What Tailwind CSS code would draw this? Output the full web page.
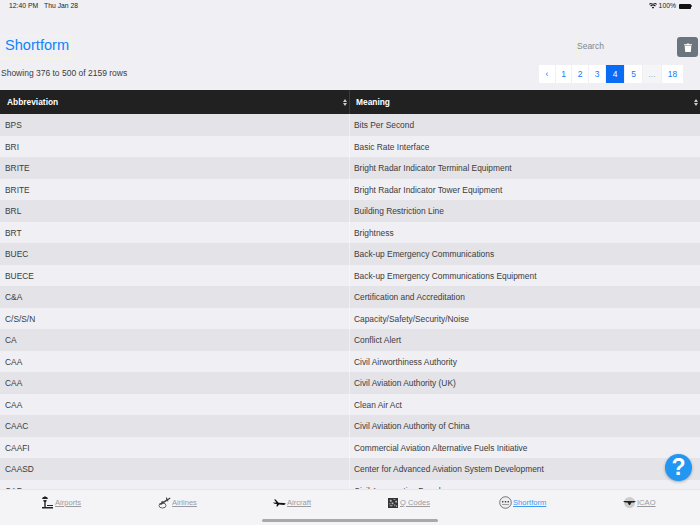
<!DOCTYPE html>
<html lang="en">
<head>
    <meta charset="UTF-8">
    <meta name="viewport" content="width=device-width, initial-scale=1.0">
    <title>Shortform</title>
    <script src="https://cdn.jsdelivr.net/npm/@tailwindcss/browser@4"></script>
</head>
<body class="bg-[#efeff4] font-['Liberation_Sans',sans-serif] text-[#3c3c40]">
<div class="relative w-[700px] h-[525px] overflow-hidden">
    <!-- status bar -->
    <div class="h-[12px] flex items-center justify-between pl-[9px] pr-[8px] text-[6.8px] text-[#222]">
        <div class="flex gap-[6px]"><span>12:40 PM</span><span>Thu Jan 28</span></div>
        <div class="flex items-center gap-[2px]">
            <svg width="8" height="6" viewBox="0 0 16 12"><path d="M8 11.5 5.6 8.6a3.6 3.6 0 0 1 4.8 0zM3.9 6.8 2.5 5.1a8.4 8.4 0 0 1 11 0l-1.4 1.7a6.2 6.2 0 0 0-8.2 0zM1.2 3.7 0 2.1a12 12 0 0 1 16 0l-1.2 1.6a10 10 0 0 0-13.6 0z" fill="#111"/></svg>
            <span>100%</span>
            <div class="w-[12px] h-[5px] bg-[#111] rounded-[1px] ml-[1px]"></div>
            <div class="w-[1px] h-[2px] bg-[#555] -ml-[2px]"></div>
        </div>
    </div>

    <!-- title and search -->
    <div class="h-[24px] mt-[23px] flex items-center justify-between">
        <h1 class="ml-[1px] pl-[3px] pr-[1px] pb-[2px] h-[24px] flex items-center border border-[#f4f4e0] text-[14.6px] text-[#0f84fa]">Shortform</h1>
        <div class="flex items-center">
            <div class="w-[102px] h-[21px] pb-[1px] border border-[#f1f2dc] flex items-center text-[8.5px] text-[#7d8791]">Search</div>
            <div class="w-[21px] h-[20px] -ml-px mr-[2px] rounded-[3px] bg-[#6c757d] flex items-center justify-center">
                <svg width="8" height="9" viewBox="0 0 8 9"><path d="M0 1.2h2.500L3 .4h2l.5.8H8v1H0zM.7 2.800h6.600L6.800 9H1.200z" fill="#fff"/></svg>
            </div>
        </div>
    </div>

    <!-- row count and pagination -->
    <div class="h-[25px] mt-[6px] flex items-start justify-between">
        <div class="pl-px pt-px text-[8.5px] leading-[14px]">Showing 376 to 500 of 2159 rows</div>
        <div class="flex gap-px mr-[17px] text-[8.5px] text-[#0f7bfa] leading-[18px] text-center">
            <div class="w-[16px] h-[18px] bg-white">‹</div>
            <div class="w-[15px] h-[18px] bg-white">1</div>
            <div class="w-[16px] h-[18px] bg-white">2</div>
            <div class="w-[16px] h-[18px] bg-white">3</div>
            <div class="w-[18px] h-[18px] bg-[#0a6cf5] text-white">4</div>
            <div class="w-[17px] h-[18px] bg-white">5</div>
            <div class="w-[18px] h-[18px] bg-[#f5f5f8] text-[#a8adb3]">...</div>
            <div class="w-[21px] h-[18px] bg-white">18</div>
        </div>
    </div>

    <!-- table -->
    <div class="h-[399px] overflow-hidden grid grid-cols-[350px_350px] auto-rows-min text-[8.4px]">
        <div class="h-[24px] bg-[#212121] text-white font-bold flex items-center justify-between pl-[7px] pr-[2px] border-r border-[#3a3a3a]">
            <span>Abbreviation</span>
            <svg width="4" height="7" viewBox="0 0 4 7"><path d="M2 0l2 3H0zM2 7 0 4h4z" fill="#ccc"/></svg>
        </div>
        <div class="h-[24px] bg-[#212121] text-white font-bold flex items-center justify-between pl-[6px] pr-[2px]">
            <span>Meaning</span>
            <svg width="4" height="7" viewBox="0 0 4 7"><path d="M2 0l2 3H0zM2 7 0 4h4z" fill="#ccc"/></svg>
        </div>

        <div class="h-[21.5px] pt-[2px] bg-[#e3e3e8] flex items-center pl-[5px] border-r border-[#efeff4]">BPS</div><div class="h-[21.5px] pt-[2px] bg-[#e3e3e8] flex items-center pl-[4px]">Bits Per Second</div>
        <div class="h-[21.5px] pt-[2px] flex items-center pl-[5px] border-r border-[#f6f6f9]">BRI</div><div class="h-[21.5px] pt-[2px] flex items-center pl-[4px]">Basic Rate Interface</div>
        <div class="h-[21.5px] pt-[2px] bg-[#e3e3e8] flex items-center pl-[5px] border-r border-[#efeff4]">BRITE</div><div class="h-[21.5px] pt-[2px] bg-[#e3e3e8] flex items-center pl-[4px]">Bright Radar Indicator Terminal Equipment</div>
        <div class="h-[21.5px] pt-[2px] flex items-center pl-[5px] border-r border-[#f6f6f9]">BRITE</div><div class="h-[21.5px] pt-[2px] flex items-center pl-[4px]">Bright Radar Indicator Tower Equipment</div>
        <div class="h-[21.5px] pt-[2px] bg-[#e3e3e8] flex items-center pl-[5px] border-r border-[#efeff4]">BRL</div><div class="h-[21.5px] pt-[2px] bg-[#e3e3e8] flex items-center pl-[4px]">Building Restriction Line</div>
        <div class="h-[21.5px] pt-[2px] flex items-center pl-[5px] border-r border-[#f6f6f9]">BRT</div><div class="h-[21.5px] pt-[2px] flex items-center pl-[4px]">Brightness</div>
        <div class="h-[21.5px] pt-[2px] bg-[#e3e3e8] flex items-center pl-[5px] border-r border-[#efeff4]">BUEC</div><div class="h-[21.5px] pt-[2px] bg-[#e3e3e8] flex items-center pl-[4px]">Back-up Emergency Communications</div>
        <div class="h-[21.5px] pt-[2px] flex items-center pl-[5px] border-r border-[#f6f6f9]">BUECE</div><div class="h-[21.5px] pt-[2px] flex items-center pl-[4px]">Back-up Emergency Communications Equipment</div>
        <div class="h-[21.5px] pt-[2px] bg-[#e3e3e8] flex items-center pl-[5px] border-r border-[#efeff4]">C&amp;A</div><div class="h-[21.5px] pt-[2px] bg-[#e3e3e8] flex items-center pl-[4px]">Certification and Accreditation</div>
        <div class="h-[21.5px] pt-[2px] flex items-center pl-[5px] border-r border-[#f6f6f9]">C/S/S/N</div><div class="h-[21.5px] pt-[2px] flex items-center pl-[4px]">Capacity/Safety/Security/Noise</div>
        <div class="h-[21.5px] pt-[2px] bg-[#e3e3e8] flex items-center pl-[5px] border-r border-[#efeff4]">CA</div><div class="h-[21.5px] pt-[2px] bg-[#e3e3e8] flex items-center pl-[4px]">Conflict Alert</div>
        <div class="h-[21.5px] pt-[2px] flex items-center pl-[5px] border-r border-[#f6f6f9]">CAA</div><div class="h-[21.5px] pt-[2px] flex items-center pl-[4px]">Civil Airworthiness Authority</div>
        <div class="h-[21.5px] pt-[2px] bg-[#e3e3e8] flex items-center pl-[5px] border-r border-[#efeff4]">CAA</div><div class="h-[21.5px] pt-[2px] bg-[#e3e3e8] flex items-center pl-[4px]">Civil Aviation Authority (UK)</div>
        <div class="h-[21.5px] pt-[2px] flex items-center pl-[5px] border-r border-[#f6f6f9]">CAA</div><div class="h-[21.5px] pt-[2px] flex items-center pl-[4px]">Clean Air Act</div>
        <div class="h-[21.5px] pt-[2px] bg-[#e3e3e8] flex items-center pl-[5px] border-r border-[#efeff4]">CAAC</div><div class="h-[21.5px] pt-[2px] bg-[#e3e3e8] flex items-center pl-[4px]">Civil Aviation Authority of China</div>
        <div class="h-[21.5px] pt-[2px] flex items-center pl-[5px] border-r border-[#f6f6f9]">CAAFI</div><div class="h-[21.5px] pt-[2px] flex items-center pl-[4px]">Commercial Aviation Alternative Fuels Initiative</div>
        <div class="h-[21.5px] pt-[2px] bg-[#e3e3e8] flex items-center pl-[5px] border-r border-[#efeff4]">CAASD</div><div class="h-[21.5px] pt-[2px] bg-[#e3e3e8] flex items-center pl-[4px]">Center for Advanced Aviation System Development</div>
        <div class="h-[21.5px] pt-[2px] flex items-center pl-[5px] border-r border-[#f6f6f9]">CAB</div><div class="h-[21.5px] pt-[2px] flex items-center pl-[4px]">Civil Aeronautics Board</div>
    </div>

    <!-- help button -->
    <div class="absolute left-[665px] top-[454px] w-[27px] h-[27px] rounded-full bg-[#2196f3] shadow-[0_1px_3px_rgba(0,0,0,0.3)] flex items-center justify-center text-white text-[23px] font-bold">?</div>

    <!-- tab bar -->
    <div class="absolute left-0 right-0 bottom-0 h-[36px] bg-[#f4f4f6] border-t border-[#e6e6ea] text-[7.6px] text-[#9a9a9e]">
        <div class="absolute left-[41px] top-[6px] flex items-center gap-[1px]">
            <svg width="13" height="13" viewBox="0 0 13 13"><path d="M2 1h4l1 2H1zM3.300 4h1.400v7H3.300zM2 4.200h4L5 6H3zM1 11h11v1.400H1zM6 9h6v1H6z" fill="#222"/><path d="M3.500 0h1v1h-1z" fill="#222"/></svg>
            <span class="underline">Airports</span>
        </div>
        <div class="absolute left-[158px] top-[6px] flex items-center gap-[1px]">
            <svg width="13" height="13" viewBox="0 0 13 13"><g fill="none" stroke="#444"><ellipse cx="4.500" cy="9.500" rx="3.500" ry="2.500" stroke-width=".8"/></g><path d="M1 8 12 1.500 12.500 2.500 3 9zM8 1l1 1 1.500 3-1 .5L8 3zM4 5l2 1-1 1-2-1z" fill="#444"/></svg>
            <span class="underline">Airlines</span>
        </div>
        <div class="absolute left-[273px] top-[6px] flex items-center gap-[1px]">
            <svg width="13" height="13" viewBox="0 0 13 13"><path d="M0 6.500 11 7l2 .7-2 1.200-5-.4-1.500 2H3.400L4 8.200 1 7.600zM1 3.500h1.600L5.600 6.800 3.600 6.700z" fill="#111"/></svg>
            <span class="underline">Aircraft</span>
        </div>
        <div class="absolute left-[388px] top-[6px] h-[13px] flex items-center gap-[1px]">
            <svg width="10" height="10" viewBox="0 0 11 11"><path d="M0 0h11v11H0z" fill="#333"/><path d="M2 2h2v2H2zM6 1h2v1H6zM8 3h2v2H8zM4 5h2v2H4zM1 6h2v1H1zM7 7h1v2H7zM2 8h3v1H2zM9 8h1v2H9z" fill="#bbb"/></svg>
            <span class="ml-[1px] underline">Q Codes</span>
        </div>
        <div class="absolute left-[499px] top-[6px] flex items-center gap-[1px] text-[#3e9bf0]">
            <svg width="13" height="13" viewBox="0 0 13 13"><circle cx="6.500" cy="6.500" r="5.800" fill="#eee" stroke="#555" stroke-width=".8"/><path d="M3 5h1.400v1.400H3zM5.800 5h1.400v1.400H5.800zM8.600 5H10v1.400H8.600z" fill="#444"/><path d="M3 8.500h7" stroke="#888" stroke-width=".8"/></svg>
            <span class="underline">Shortform</span>
        </div>
        <div class="absolute left-[623px] top-[6px] flex items-center gap-[1px]">
            <svg width="13" height="13" viewBox="0 0 13 13"><circle cx="6.500" cy="6.500" r="5.500" fill="#ccc"/><path d="M0 5h13l-2 1.500H8.500L7 9H6L4.500 6.500H2z" fill="#222"/></svg>
            <span class="underline">ICAO</span>
        </div>
        <div class="absolute left-[262px] top-[29px] w-[176px] h-[2.500px] rounded-full bg-[#a9a9ad]"></div>
    </div>
</div>
</body>
</html>
